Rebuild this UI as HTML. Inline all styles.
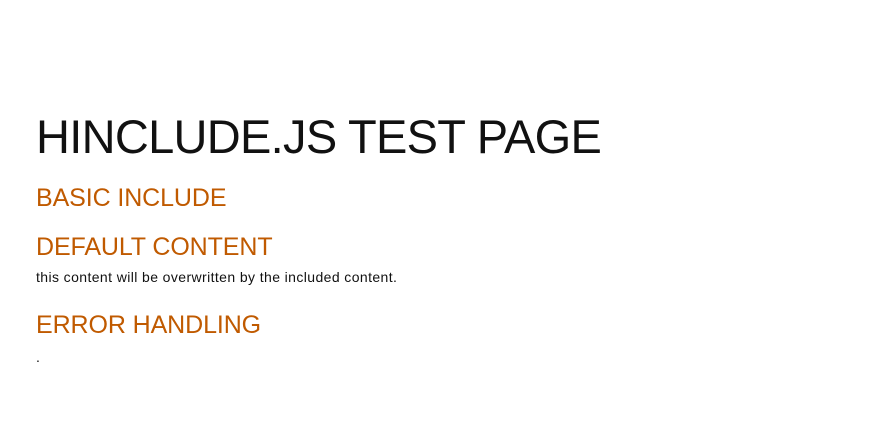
<!DOCTYPE html>
<html><head><style>
body{margin:0;width:892px;height:440px;background:#fff;font-family:"Liberation Sans",Arial,sans-serif;position:relative;overflow:hidden}
div{position:absolute;left:36px;line-height:1;white-space:nowrap}
.t{font-size:47px;color:#111;top:113px;letter-spacing:-0.7px}
.h{font-size:25px;color:#c05a00;letter-spacing:-0.1px}
.p{font-size:14px;color:#111;letter-spacing:0.4px}
</style></head><body>
<div class="t">HINCLUDE.JS TEST PAGE</div>
<div class="h" style="top:186px">BASIC INCLUDE</div>
<div class="h" style="top:235px">DEFAULT CONTENT</div>
<div class="p" style="top:270px">this content will be overwritten by the included content.</div>
<div class="h" style="top:313px">ERROR HANDLING</div>
<div class="p" style="top:350px">.</div>
</body></html>
